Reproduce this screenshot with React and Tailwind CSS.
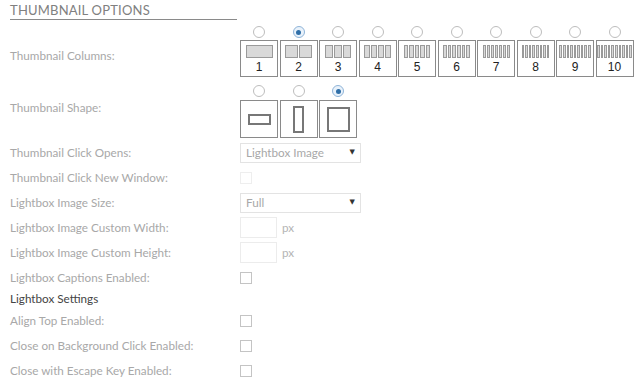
import React from "react";

const Radio = ({ checked }) => (
  <div
    className={
      "w-[12px] h-[12px] rounded-full border flex items-center justify-center " +
      (checked ? "border-[#8fb4d8] bg-[#e9f2fb]" : "border-[#bdbdbd] bg-white")
    }
  >
    {checked && <div className="w-[5px] h-[5px] rounded-full bg-[#2f6fa8]" />}
  </div>
);

const ColBox = ({ n, checked }) => {
  const w = Math.max((27 - (n - 1)) / n, 2.6);
  return (
    <div className="flex flex-col items-center w-[38px]">
      <Radio checked={checked} />
      <div className="mt-[2px] w-[38px] h-[37px] border border-[#8a8a8a] flex flex-col items-center pt-[4px]">
        <div className="flex gap-[1px] h-[13px]">
          {Array.from({ length: n }).map((_, i) => (
            <div
              key={i}
              className="h-[13px] border border-[#9a9a9a] bg-[#d9d9d9] shrink-0"
              style={{ width: w + "px" }}
            />
          ))}
        </div>
        <div className="mt-[2px] text-[12px] leading-[14px] text-[#222] font-['Liberation_Sans',Arial,sans-serif]">
          {n}
        </div>
      </div>
    </div>
  );
};

const ShapeBox = ({ kind, checked }) => (
  <div className="flex flex-col items-center w-[38px]">
    <Radio checked={checked} />
    <div className="mt-[3px] w-[38px] h-[38px] border border-[#8a8a8a] flex items-center justify-center">
      {kind === "h" && <div className="w-[23px] h-[11px] border-2 border-[#777]" />}
      {kind === "v" && <div className="w-[11px] h-[27px] border-2 border-[#777]" />}
      {kind === "s" && <div className="w-[23px] h-[25px] border-2 border-[#777]" />}
    </div>
  </div>
);

const Label = ({ children }) => (
  <div className="w-[240px] pl-[10px] text-[11.7px] text-[#a8a8a8] shrink-0">{children}</div>
);

const Row = ({ label, children }) => (
  <div className="flex items-center h-[25px]">
    <Label>{label}</Label>
    <div className="flex items-center">{children}</div>
  </div>
);

const Select = ({ value }) => (
  <div className="w-[121px] h-[20px] border border-[#e3e3e3] flex items-center justify-between pl-[5px] pr-[5px] text-[11.7px] text-[#a8a8a8]">
    <span>{value}</span>
    <span className="text-[7px] text-[#333] font-['DejaVu_Sans',sans-serif]">▼</span>
  </div>
);

const Check = ({ light }) => (
  <div
    className={
      "w-[12px] h-[12px] border " + (light ? "border-[#eeeeee]" : "border-[#c4c4c4]")
    }
  />
);

const PxInput = () => (
  <div className="flex items-center">
    <div className="w-[37px] h-[21px] border border-[#ececec]" />
    <span className="ml-[5px] text-[11.7px] text-[#b4b4b4]">px</span>
  </div>
);

export default function App() {
  return (
    <div className="w-[640px] h-[382px] bg-white overflow-hidden font-['Lato',sans-serif]">
      <div className="pl-[10px] pt-[3px]">
        <div className="w-[227px] border-b border-[#8a8a8a] text-[13px] leading-[15px] pb-[1px] text-[#808080] tracking-[0.2px]">
          THUMBNAIL OPTIONS
        </div>
      </div>

      <div className="flex items-start mt-[6px] h-[52px]">
        <div className="pt-[21px]">
          <Label>Thumbnail Columns:</Label>
        </div>
        <div className="flex gap-[1.5px]">
          {[1, 2, 3, 4, 5, 6, 7, 8, 9, 10].map((n) => (
            <ColBox key={n} n={n} checked={n === 2} />
          ))}
        </div>
      </div>

      <div className="flex items-start mt-[7px] h-[55px]">
        <div className="pt-[14px]">
          <Label>Thumbnail Shape:</Label>
        </div>
        <div className="flex gap-[1.5px]">
          <ShapeBox kind="h" />
          <ShapeBox kind="v" />
          <ShapeBox kind="s" checked />
        </div>
      </div>

      <div>
        <Row label="Thumbnail Click Opens:">
          <Select value="Lightbox Image" />
        </Row>
        <Row label="Thumbnail Click New Window:">
          <Check light />
        </Row>
        <Row label="Lightbox Image Size:">
          <Select value="Full" />
        </Row>
        <Row label="Lightbox Image Custom Width:">
          <PxInput />
        </Row>
        <Row label="Lightbox Image Custom Height:">
          <PxInput />
        </Row>
        <Row label="Lightbox Captions Enabled:">
          <Check />
        </Row>
        <div className="h-[18px] pt-[1px] pl-[10px] text-[11.7px] text-[#444] leading-[14px]">Lightbox Settings</div>
        <Row label="Align Top Enabled:">
          <Check />
        </Row>
        <Row label="Close on Background Click Enabled:">
          <Check />
        </Row>
        <Row label="Close with Escape Key Enabled:">
          <Check />
        </Row>
      </div>
    </div>
  );
}
